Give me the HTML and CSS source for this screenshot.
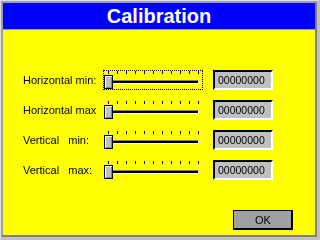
FILE: index.html
```html
<!DOCTYPE html>
<html lang="en">
<head>
  <meta charset="UTF-8">
  <title>Calibration</title>
  <link rel="stylesheet" href="styles.css">
</head>
<body>
  <div class="window">
    <div class="frame">
      <div class="title">Calibration</div>
      <div class="content">
        <div class="rows">
          <div class="label">Horizontal min:</div>
          <div class="slider focused">
            <div class="ticks"><i></i><i></i><i></i><i></i><i></i><i></i><i></i><i></i><i></i><i></i><i></i></div>
            <div class="rail"><span class="thumb"></span><span class="track"></span></div>
          </div>
          <div class="value"><span>00000000</span></div>

          <div class="label">Horizontal max</div>
          <div class="slider">
            <div class="ticks"><i></i><i></i><i></i><i></i><i></i><i></i><i></i><i></i><i></i><i></i><i></i></div>
            <div class="rail"><span class="thumb"></span><span class="track"></span></div>
          </div>
          <div class="value"><span>00000000</span></div>

          <div class="label">Vertical   min:</div>
          <div class="slider">
            <div class="ticks"><i></i><i></i><i></i><i></i><i></i><i></i><i></i><i></i><i></i><i></i><i></i></div>
            <div class="rail"><span class="thumb"></span><span class="track"></span></div>
          </div>
          <div class="value"><span>00000000</span></div>

          <div class="label">Vertical   max:</div>
          <div class="slider">
            <div class="ticks"><i></i><i></i><i></i><i></i><i></i><i></i><i></i><i></i><i></i><i></i><i></i></div>
            <div class="rail"><span class="thumb"></span><span class="track"></span></div>
          </div>
          <div class="value"><span>00000000</span></div>
        </div>
        <div class="footer">
          <button class="ok"><span>OK</span></button>
        </div>
      </div>
    </div>
  </div>
</body>
</html>
```

FILE: styles.css
```css
body {
  margin: 0;
  width: 320px;
  height: 240px;
  overflow: hidden;
  font-family: "Liberation Sans", Arial, sans-serif;
  background: #c0c0c0;
}
.window {
  width: 320px;
  height: 240px;
  box-sizing: border-box;
  border-top: 1px solid #e0e0e0;
  border-left: 1px solid #e0e0e0;
  border-right: 3px solid #c0c0c0;
  border-bottom: 3px solid #c0c0c0;
}
.frame {
  height: 100%;
  box-sizing: border-box;
  border-top: 2px solid #a0a0a0;
  border-left: 2px solid #a0a0a0;
  border-right: 2px solid #808080;
  border-bottom: 2px solid #808080;
  background: #ffff00;
  display: flex;
  flex-direction: column;
}
.title {
  height: 26px;
  line-height: 26px;
  background: #0000ff;
  border-bottom: 1px solid #a0a0a0;
  color: #fff;
  font-weight: bold;
  font-size: 20px;
  text-align: center;
}
.content {
  flex: 1;
  padding: 40px 0 0 20px;
}
.rows {
  display: grid;
  grid-template-columns: 80px 100px 60px;
  grid-auto-rows: 20px;
  row-gap: 10px;
  align-items: center;
}
/* transparent layer -> grayscale text instead of coloured fringes */
.label,
.value span,
.ok span {
  will-change: transform;
}
.label {
  font-size: 11px;
  color: #000;
  white-space: pre;
}
.slider {
  width: 100px;
  height: 20px;
  box-sizing: border-box;
  border: 1px dotted transparent;
  margin-right: 10px;
}
.slider.focused {
  border-color: #000;
}
.ticks {
  display: flex;
  justify-content: space-between;
  height: 3px;
  padding: 0 3px 0 4px;
  margin-bottom: 1px;
}
.ticks i {
  width: 1px;
  height: 3px;
  background: #000;
}
.rail {
  display: flex;
  align-items: center;
  height: 14px;
}
.thumb {
  width: 9px;
  height: 14px;
  box-sizing: border-box;
  border: 1px solid #000;
  background: #c0c0c0;
  box-shadow: inset 1px 1px 0 #fff, inset -1px -1px 0 #808080;
}
.track {
  flex: 1;
  height: 4px;
  box-sizing: border-box;
  margin-right: 3px;
  border-top: 1px solid #808080;
  border-bottom: 1px solid #fff;
  border-right: 1px solid #fff;
  background: #000;
}
.value {
  width: 60px;
  height: 20px;
  box-sizing: border-box;
  margin-left: 10px;
  padding-left: 3px;
  border-top: 2px solid #000;
  border-left: 2px solid #000;
  border-right: 2px solid #fff;
  border-bottom: 2px solid #fff;
  background: #c0c0c0;
  font-size: 10.5px;
  line-height: 16px;
  color: #000;
}
.value span {
  display: inline-block;
}
.footer {
  display: flex;
  justify-content: flex-end;
  padding: 30px 22px 0 0;
}
.ok {
  width: 60px;
  height: 20px;
  padding: 0;
  border: 1px solid #000;
  border-right-width: 2px;
  border-bottom-width: 2px;
  background: #a0a0a0;
  font-family: "Liberation Sans", Arial, sans-serif;
  font-size: 11px;
  color: #000;
}
.ok span {
  display: inline-block;
}
```
